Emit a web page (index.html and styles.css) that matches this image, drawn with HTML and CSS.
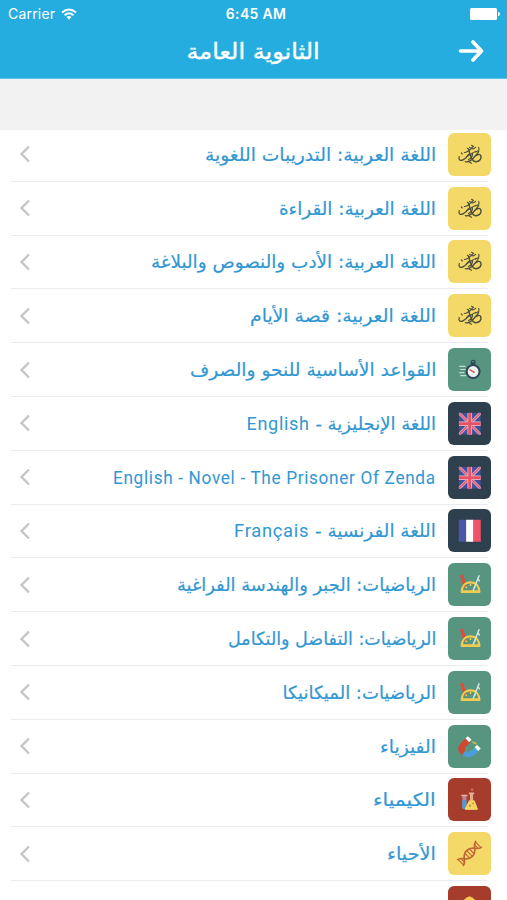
FILE: index.html
```
<!DOCTYPE html>
<html lang="ar" dir="rtl">
<head>
    <meta charset="UTF-8">
    <meta name="viewport" content="width=device-width, initial-scale=1.0">
    <title>الثانوية العامة</title>
    <link rel="stylesheet" href="styles.css">
</head>
<body>
    <svg class="symbols" aria-hidden="true">
        <symbol id="arabic" viewBox="0 0 42 42" fill="none" stroke="#4c4f3c" stroke-linecap="round">
            <path d="M11 23c-1 3 1 5 4 3 2-1 4-3 5-5" stroke-width="1.2"/>
            <path d="M19 15c2 0 1 3 3 7 1 3 3 6 5 6 4 0 6-3 5-6-1-2-4-1-6 1-2 3-6 6-9 5" stroke-width="1.4"/>
            <path d="M16 19c3 1 5-3 9-6m-4 1c2 2 4 2 6 0m-9 9c3-1 6-4 9-5m-7 8c2-1 4-3 4-6m6-6c1 3-1 6-3 8" stroke-width="1.1"/>
            <path d="M23 12l1 .5m-11 7l1 1m13-2l2-1m-8 11l2 1" stroke-width="1.1"/>
        </symbol>
        <symbol id="watch" viewBox="0 0 42 42">
            <path d="M11 18h6m-5 3h6m-7 3h5m-4 3h6" stroke="#bfe0cf" stroke-width="1.2"/>
            <path d="M23 14h3v3h-3z" fill="#2e4756"/>
            <circle cx="24.500" cy="14" r="1.900" fill="none" stroke="#2e4756" stroke-width="1.200"/>
            <circle cx="24.500" cy="23" r="6.300" fill="#eef3f1" stroke="#2e4756" stroke-width="2"/>
            <path d="M21 21l5 3" stroke="#d45050" stroke-width="1.400"/>
        </symbol>
        <symbol id="uk" viewBox="0 0 42 42">
            <svg x="10.500" y="10.500" width="21.500" height="21.500" viewBox="0 0 22 22">
                <path d="M0 0h22v22h-22z" fill="#41509c"/>
                <path d="M0 0l22 22m0-22l-22 22" stroke="#dcaec6" stroke-width="3"/>
                <path d="M0 0l22 22m0-22l-22 22" stroke="#e55b70" stroke-width="1.500"/>
                <path d="M11 0v22m-11-11h22" stroke="#ecc0ce" stroke-width="4.600"/>
                <path d="M11 0v22m-11-11h22" stroke="#e55367" stroke-width="3"/>
            </svg>
        </symbol>
        <symbol id="france" viewBox="0 0 42 42">
            <path d="M10.500 10.500h7.200v21.500h-7.200z" fill="#4857a8"/>
            <path d="M17.700 10.500h7.200v21.500h-7.200z" fill="#fff"/>
            <path d="M24.900 10.500h7.100v21.500h-7.100z" fill="#f0526a"/>
        </symbol>
        <symbol id="math" viewBox="0 0 42 42">
            <path d="M13.500 13l3 9" stroke="#d94f38" stroke-width="3.200" stroke-linecap="round"/>
            <path d="M13.500 28c0-5 3-9 8.500-9s8.500 4 8.500 9" fill="none" stroke="#efcb50" stroke-width="2.200"/>
            <path d="M12.500 28h19" stroke="#efcb50" stroke-width="2.600"/>
            <path d="M17 23l1.500 1.500m3.500-4v2m5 .5l-1.500 1.500" stroke="#efcb50" stroke-width="1.400"/>
            <path d="M30.500 12l-6 15m4.500-12l2 3" stroke="#d6e8e2" stroke-width="1.400"/>
        </symbol>
        <symbol id="magnet" viewBox="0 0 42 42">
            <path d="M17 13l4.500 4.500-4.500 4q-1.500 2 0 4l-3 4q-8-6 0-13.500z" fill="#cf482f"/>
            <path d="M17 25q2 2.500 5.500 0l4-3 4 3-5 4.500q-6 4-11.500-.5z" fill="#4b9fd8"/>
            <path d="M17 13l2.500-2 3.500 3.500-2.500 2zM26 21.500l2.500-2 3.500 3.500-2.500 2.500z" fill="#fff"/>
            <path d="M23.500 16l2 2 1-1 1.500 2" fill="none" stroke="#b9c54d" stroke-width="1.200"/>
        </symbol>
        <symbol id="flask" viewBox="0 0 42 42">
            <path d="M14 17h4v12q-2 2-4 0z" fill="#bf8592"/>
            <path d="M14 21.500h4v8q-2 2-4 0z" fill="#4f9bd0"/>
            <path d="M13 17h6M20.500 15h5" stroke="#e4b5ae" stroke-width="1.500"/>
            <path d="M21.500 15h3v6l4.500 9q0 1-1 1h-10.500q-1 0-1-1l5-9z" fill="#e7a887"/>
            <path d="M20.500 22h5.500l3 8q0 1-1 1h-10.500q-1 0-1-1z" fill="#f4d661"/>
            <circle cx="23.500" cy="11.500" r="1.200" fill="#e1695c"/>
            <circle cx="21.500" cy="27" r="1" fill="#b98541"/>
            <circle cx="24.500" cy="25" r=".8" fill="#b98541"/>
        </symbol>
        <symbol id="dna" viewBox="0 0 42 42">
            <g transform="rotate(-45 21 21)" fill="none" stroke="#bf6634" stroke-width="1.600">
                <path d="M8 17c6 0 5 8 13 8s7-8 13-8M8 25c6 0 5-8 13-8s7 8 13 8"/>
                <path d="M9 17v8m2.500-7v6m6.500-6v6m3-7v8m3-7v6m6.500-6v6m2.500-7v8" stroke-width="1.100"/>
            </g>
        </symbol>
        <symbol id="helmet" viewBox="0 0 42 42">
            <path d="M12 21q1-7 7-10l2-1 2 1q6 3 7 10z" fill="#f4cf4d"/>
        </symbol>
        <symbol id="chevron" viewBox="0 0 12 18">
            <path d="M10 1.500L2.500 9l7.500 7.500" fill="none" stroke="#c6c6c8" stroke-width="2.400"/>
        </symbol>
    </svg>

    <header class="header">
        <div class="status" dir="ltr">
            <div class="carrier">
                <span>Carrier</span>
                <svg class="wifi" viewBox="0 0 16 12" fill="none" stroke="#fff" stroke-width="2">
                    <path d="M1 4.500q7-6 14 0M3.500 7.300q4.500-4 9 0"/>
                    <path d="M5.500 9q2.500-2 5 0l-2.500 2.700z" fill="#fff" stroke="none"/>
                </svg>
            </div>
            <span class="time">6:45 AM</span>
            <svg class="battery" viewBox="0 0 30 12" fill="#fff">
                <rect width="27" height="12" rx="1.500"/>
                <path d="M28 4q2 0 2 2t-2 2z"/>
            </svg>
        </div>
        <div class="navbar">
            <svg class="back" viewBox="0 0 26 22" fill="none" stroke="#fff" stroke-width="3.600" stroke-linecap="round" stroke-linejoin="round">
                <path d="M2.500 11h21M15 2l8.500 9-8.500 9"/>
            </svg>
            <h1><span data-width="133">الثانوية العامة</span></h1>
        </div>
    </header>
    <div class="spacer"></div>

    <ul class="subjects" id="subjects"></ul>

    <script src="script.js"></script>
</body>
</html>
```
FILE: styles.css
```
* {
    box-sizing: border-box;
}
body {
    margin: 0;
    height: 900px;
    overflow: hidden;
    background: #fff;
    font-family: "DejaVu Sans", sans-serif;
}
.symbols {
    position: absolute;
    width: 0;
    height: 0;
}
.header {
    height: 79px;
    background: #26addf;
    color: #fff;
    border-bottom: 1px solid #5cc3e8;
}
.status {
    display: grid;
    grid-template-columns: 1fr auto 1fr;
    align-items: center;
    height: 27px;
    padding: 0 7px 0 8px;
    font: 14px Inter, sans-serif;
}
.carrier {
    display: flex;
    align-items: center;
    gap: 6px;
    letter-spacing: 0.2px;
}
.wifi {
    width: 16px;
    height: 12px;
}
.time {
    padding-left: 4px;
    font-weight: 600;
    letter-spacing: 0.3px;
}
.battery {
    width: 30px;
    height: 12px;
    justify-self: end;
}
.navbar {
    display: grid;
    grid-template-columns: 60px 1fr 60px;
    align-items: center;
    height: 48px;
}
.back {
    width: 26px;
    height: 22px;
    margin-right: 23px;
}
.navbar h1 {
    margin: 0;
    font-size: 22px;
    font-weight: normal;
    text-align: center;
    -webkit-text-stroke: 0.4px #fff;
}
.navbar h1 span {
    display: inline-block;
}
.spacer {
    height: 51px;
    background: #f2f2f2;
}
.subjects {
    list-style: none;
    margin: -2px 0 0;
    padding: 0;
}
.subjects li {
    display: flex;
    align-items: center;
    height: 53.8px;
    margin: 0 19px 0 11px;
    padding: 0 0 0 8px;
    border-bottom: 1.5px solid #ececee;
}
.name {
    flex: 1;
    padding-right: 12px;
    color: #3197d3;
    font-size: 18px;
    white-space: nowrap;
}
.name span {
    display: inline-block;
    transform-origin: right;
    -webkit-text-stroke: 0.2px #3197d3;
}
.latin {
    font-family: Roboto, sans-serif;
    letter-spacing: 0.7px;
    -webkit-text-stroke: 0;
}
.icon {
    width: 43px;
    height: 43px;
    margin-right: -3px;
    border-radius: 6px;
}
.yellow {
    background: #f4d969;
}
.green {
    background: #589581;
}
.navy {
    background: #2e404e;
}
.red {
    background: #a53c2c;
}
.chevron {
    width: 12px;
    height: 18px;
}
```
FILE: script.js
```
const subjects = [
    { name: 'اللغة العربية: التدريبات اللغوية', icon: 'arabic', color: 'yellow', width: 231 },
    { name: 'اللغة العربية: القراءة', icon: 'arabic', color: 'yellow', width: 157 },
    { name: 'اللغة العربية: الأدب والنصوص والبلاغة', icon: 'arabic', color: 'yellow', width: 285 },
    { name: 'اللغة العربية: قصة الأيام', icon: 'arabic', color: 'yellow', width: 186 },
    { name: 'القواعد الأساسية للنحو والصرف', icon: 'watch', color: 'green', width: 246 },
    { name: 'اللغة الإنجليزية - <bdi class="latin">English</bdi>', icon: 'uk', color: 'navy', width: 189 },
    { name: '<bdi class="latin">English - Novel - The Prisoner Of Zenda</bdi>', icon: 'uk', color: 'navy', width: 323 },
    { name: 'اللغة الفرنسية - <bdi class="latin">Français</bdi>', icon: 'france', color: 'navy', width: 202 },
    { name: 'الرياضيات: الجبر والهندسة الفراغية', icon: 'math', color: 'green', width: 259 },
    { name: 'الرياضيات: التفاضل والتكامل', icon: 'math', color: 'green', width: 208 },
    { name: 'الرياضيات: الميكانيكا', icon: 'math', color: 'green', width: 153 },
    { name: 'الفيزياء', icon: 'magnet', color: 'green', width: 56 },
    { name: 'الكيمياء', icon: 'flask', color: 'red', width: 63 },
    { name: 'الأحياء', icon: 'dna', color: 'yellow', width: 49 },
    { name: 'التاريخ', icon: 'helmet', color: 'red', width: 46 }
];

document.getElementById('subjects').innerHTML = subjects.map(subject => `
    <li>
        <svg class="icon ${subject.color}"><use href="#${subject.icon}"/></svg>
        <div class="name"><span data-width="${subject.width}">${subject.name}</span></div>
        <svg class="chevron"><use href="#chevron"/></svg>
    </li>
`).join('');

// Stretch each label to its width
document.querySelectorAll('[data-width]').forEach(label => {
    label.style.transform = `scaleX(${label.dataset.width / label.offsetWidth})`;
});
```
